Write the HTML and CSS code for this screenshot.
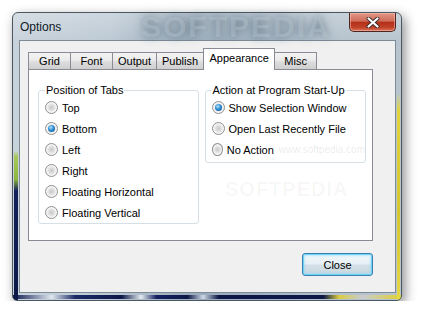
FILE: index.html
```html
<!DOCTYPE html>
<html lang="en">
  <head>
    <meta charset="utf-8" />
    <title>Options</title>
    <link rel="stylesheet" href="styles.css">
  </head>
  <body>
    <div class="window">
      <div class="titlebar">
        <span class="title">Options</span>
        <span class="watermark">SOFTPEDIA</span>
        <button class="close-x" type="button" title="Close">
          <svg width="14" height="11" viewBox="0 0 14 11">
            <path d="M2.5 1.5 L11.5 9.5 M11.5 1.5 L2.5 9.5" stroke="#3b2a28" stroke-width="4" stroke-linecap="round" />
            <path d="M2.5 1.5 L11.5 9.5 M11.5 1.5 L2.5 9.5" stroke="#ffffff" stroke-width="2.2" stroke-linecap="round" />
          </svg>
        </button>
      </div>
      <div class="client">
        <div class="tabs">
          <div class="tab">Grid</div>
          <div class="tab">Font</div>
          <div class="tab">Output</div>
          <div class="tab">Publish</div>
          <div class="tab selected">Appearance</div>
          <div class="tab">Misc</div>
        </div>
        <div class="panel">
          <fieldset class="group group-left">
            <legend>Position of Tabs</legend>
            <label class="option"><span class="radio"></span>Top</label>
            <label class="option"><span class="radio checked"></span>Bottom</label>
            <label class="option"><span class="radio"></span>Left</label>
            <label class="option"><span class="radio"></span>Right</label>
            <label class="option"><span class="radio"></span>Floating Horizontal</label>
            <label class="option"><span class="radio"></span>Floating Vertical</label>
          </fieldset>
          <fieldset class="group group-right">
            <legend>Action at Program Start-Up</legend>
            <label class="option"><span class="radio checked"></span>Show Selection Window</label>
            <label class="option"><span class="radio"></span>Open Last Recently File</label>
            <label class="option"><span class="radio"></span>No Action<span class="mark-url">www.softpedia.com</span></label>
          </fieldset>
          <span class="mark-big">SOFTPEDIA</span>
        </div>
        <div class="buttons">
          <button class="btn" type="button">Close</button>
        </div>
      </div>
    </div>
  </body>
</html>
```

FILE: styles.css
```css
html {
  background-color: #fff;
}
body {
  margin: 0;
  font-family: "Liberation Sans", Arial, sans-serif;
  font-size: 11px;
  color: #000;
}

/* window frame */
.window {
  box-sizing: border-box;
  width: 390px;
  height: 289px;
  margin: 12px 0 0 12px;
  padding: 0 4px 6px 6px;
  border: 1px solid #4b5864;
  border-radius: 6px 6px 5px 5px;
  box-shadow: 3px 4px 12px rgba(0, 0, 0, 0.45);
  background:
    linear-gradient(to bottom, rgba(0,0,0,0) 28%, #e2d43c 34%, #d6c630 70%, #e4d848 100%) right 1px top / 3px 100% no-repeat,
    linear-gradient(to bottom, rgba(0,0,0,0) 48%, #a8c85a 50%, #8bb53e 58%, #13205a 62%, #0d1848 100%) left 1px top / 4px 100% no-repeat,
    linear-gradient(to right, #0f1a50 0, #dfe7f0 10%, #1a2a66 16%, #0e1848 28%, #e6ecf2 33%, #142060 37%, #0d1848 45%, #d0dbe8 49%, #0d1848 53%, #0d1848 80%, #d9cc40 84%, #c8ccd0 90%, #e0d030 100%) left bottom 1px / 100% 4px no-repeat,
    linear-gradient(to bottom, rgba(255,255,255,0.25), rgba(255,255,255,0) 30px),
    linear-gradient(to right, #c8d2db 0, #bcc9d4 25%, #9aabb9 45%, #a0b0be 62%, #b3c1cc 80%, #b8c5cf 100%);
  display: flex;
  flex-direction: column;
}

.titlebar {
  position: relative;
  height: 27px;
  padding-left: 1px;
  display: flex;
  align-items: center;
}
.title {
  font-size: 12px;
  color: #0f1a24;
  position: relative;
  z-index: 1;
}
.watermark {
  position: absolute;
  left: 122px;
  top: -3px;
  font-weight: bold;
  font-size: 30px;
  letter-spacing: 2px;
  color: rgba(190, 204, 214, 0.35);
  text-shadow: 0 0 9px rgba(60, 82, 100, 0.6);
}
.close-x {
  margin-left: auto;
  margin-right: 1px;
  align-self: flex-start;
  width: 47px;
  height: 19px;
  padding: 0;
  border: 1px solid #4f2520;
  border-top: 0;
  border-radius: 0 0 5px 5px;
  background: linear-gradient(to bottom, #e29888 0, #cf6c58 45%, #b43019 52%, #c14228 80%, #d9765c 100%);
  box-shadow: inset 0 0 0 1px rgba(255, 200, 190, 0.5);
  display: flex;
  align-items: center;
  justify-content: center;
}

/* client area */
.client {
  box-sizing: border-box;
  width: 377px;
  height: 253px;
  padding: 7px 22px 0 8px;
  border: 1px solid #7d8b97;
  background-color: #f0f0f0;
}

.tabs {
  display: flex;
  align-items: flex-end;
  height: 21px;
  position: relative;
  z-index: 1;
}
.tab {
  box-sizing: border-box;
  min-width: 43px;
  height: 17px;
  padding: 0 5px;
  margin-right: -1px;
  border: 1px solid #898c95;
  border-bottom: 0;
  background: linear-gradient(to bottom, #f3f3f3 0, #ebebeb 45%, #dddddd 55%, #cfcfcf 100%);
  text-align: center;
  line-height: 17px;
}
.tab.selected {
  min-width: 72px;
  height: 22px;
  margin-bottom: -1px;
  background: #fff;
  line-height: 19px;
  position: relative;
  z-index: 2;
}

.panel {
  position: relative;
  box-sizing: border-box;
  width: 345px;
  height: 172px;
  padding: 14px 6px 0 9px;
  border: 1px solid #898c95;
  background-color: #fff;
  display: flex;
  align-items: flex-start;
  gap: 6px;
}

.group {
  box-sizing: border-box;
  margin: 0;
  min-width: 0;
  padding: 0 0 0 6px;
  border: 1px solid #d5dfe5;
  border-radius: 3px;
  position: relative;
  z-index: 1;
}
.group-left {
  width: 161px;
}
.group-right {
  width: 162px;
  padding-bottom: 2px;
}
.group legend {
  padding: 0 1px;
  line-height: 13px;
}

.option {
  height: 21px;
  display: flex;
  align-items: center;
  white-space: nowrap;
}
.radio {
  position: relative;
  box-sizing: border-box;
  width: 13px;
  height: 13px;
  margin-right: 4px;
  border: 1px solid #8e8f8f;
  border-radius: 50%;
  background: radial-gradient(circle at 50% 50%, #c8c8c8 0, #dedede 35%, #f4f4f4 60%, #ffffff 100%);
}
.radio.checked::after {
  content: "";
  position: absolute;
  left: 2px;
  top: 2px;
  width: 7px;
  height: 7px;
  border-radius: 50%;
  background: radial-gradient(circle at 40% 35%, #b6e4fb 0, #2f8fd4 45%, #0c4d8c 100%);
}

.mark-url {
  margin-left: 5px;
  font-size: 10px;
  color: rgba(0, 0, 0, 0.1);
}
.mark-big {
  position: absolute;
  left: 196px;
  top: 108px;
  font-size: 20px;
  font-weight: bold;
  letter-spacing: 1px;
  color: rgba(0, 0, 0, 0.04);
}

.buttons {
  display: flex;
  justify-content: flex-end;
  margin-top: 12px;
}
.btn {
  box-sizing: border-box;
  width: 71px;
  height: 23px;
  border: 1px solid #3c7fb1;
  border-radius: 3px;
  background: linear-gradient(to bottom, #f2f8fb 0, #e7f0f5 45%, #d3e0e8 55%, #c8d6df 100%);
  box-shadow: inset 0 0 0 1px #6fd2f5, inset 0 0 2px 2px rgba(140, 220, 250, 0.5);
  font-family: "Liberation Sans", Arial, sans-serif;
  font-size: 11px;
  color: #000;
  padding: 0;
}
```
